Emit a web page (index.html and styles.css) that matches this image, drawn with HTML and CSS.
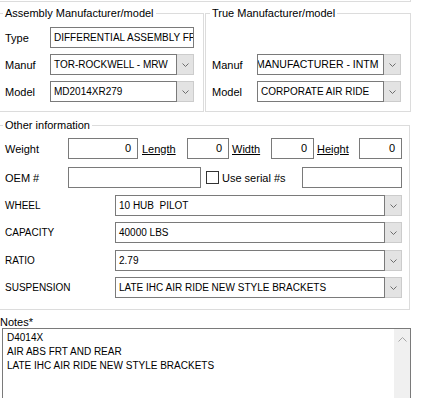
FILE: index.html
```html
<!DOCTYPE html>
<html lang="en">
<head>
    <meta charset="UTF-8">
    <meta name="viewport" content="width=device-width, initial-scale=1.0">
    <title>Assembly Details</title>
    <link rel="stylesheet" href="styles.css">
</head>
<body>

<div class="prev-box"></div>

<div class="top-groups">
    <fieldset class="group group-half">
        <legend>Assembly Manufacturer/model</legend>
        <div class="pair-row">
            <span class="caption">Type</span>
            <div class="textbox">DIFFERENTIAL ASSEMBLY FF</div>
        </div>
        <div class="pair-row">
            <span class="caption">Manuf</span>
            <div class="combo">
                <div class="combo-text">TOR-ROCKWELL - MRW</div>
                <div class="combo-btn"><svg width="7" height="4" viewBox="0 0 7 4"><polyline points="0.5,0.5 3.5,3.5 6.5,0.5" fill="none" stroke="#6d6d6d" stroke-width="1"/></svg></div>
            </div>
        </div>
        <div class="pair-row">
            <span class="caption">Model</span>
            <div class="combo">
                <div class="combo-text">MD2014XR279</div>
                <div class="combo-btn"><svg width="7" height="4" viewBox="0 0 7 4"><polyline points="0.5,0.5 3.5,3.5 6.5,0.5" fill="none" stroke="#6d6d6d" stroke-width="1"/></svg></div>
            </div>
        </div>
    </fieldset>

    <fieldset class="group group-half">
        <legend>True Manufacturer/model</legend>
        <div class="pair-row"></div>
        <div class="pair-row">
            <span class="caption">Manuf</span>
            <div class="combo">
                <div class="combo-text"><span class="scrolled">MANUFACTURER - INTM</span></div>
                <div class="combo-btn"><svg width="7" height="4" viewBox="0 0 7 4"><polyline points="0.5,0.5 3.5,3.5 6.5,0.5" fill="none" stroke="#6d6d6d" stroke-width="1"/></svg></div>
            </div>
        </div>
        <div class="pair-row">
            <span class="caption">Model</span>
            <div class="combo">
                <div class="combo-text">CORPORATE AIR RIDE</div>
                <div class="combo-btn"><svg width="7" height="4" viewBox="0 0 7 4"><polyline points="0.5,0.5 3.5,3.5 6.5,0.5" fill="none" stroke="#6d6d6d" stroke-width="1"/></svg></div>
            </div>
        </div>
    </fieldset>
</div>

<fieldset class="group group-other">
    <legend>Other information</legend>

    <div class="dim-row">
        <span class="caption caption-wide">Weight</span>
        <div class="textbox num w-weight">0</div>
        <a class="dim-link link-length">Length</a>
        <div class="textbox num w-length">0</div>
        <a class="dim-link link-width">Width</a>
        <div class="textbox num w-dim">0</div>
        <a class="dim-link link-height">Height</a>
        <div class="textbox num w-dim">0</div>
    </div>

    <div class="oem-row">
        <span class="caption caption-wide">OEM #</span>
        <div class="textbox w-oem"></div>
        <span class="checkbox"></span>
        <span class="check-label">Use serial #s</span>
        <div class="textbox w-serial"></div>
    </div>

    <div class="attr-row first-attr">
        <span class="attr-name">WHEEL</span>
        <div class="combo combo-wide">
            <div class="combo-text">10 HUB&nbsp; PILOT</div>
            <div class="combo-btn"><svg width="7" height="4" viewBox="0 0 7 4"><polyline points="0.5,0.5 3.5,3.5 6.5,0.5" fill="none" stroke="#6d6d6d" stroke-width="1"/></svg></div>
        </div>
    </div>
    <div class="attr-row">
        <span class="attr-name">CAPACITY</span>
        <div class="combo combo-wide">
            <div class="combo-text">40000 LBS</div>
            <div class="combo-btn"><svg width="7" height="4" viewBox="0 0 7 4"><polyline points="0.5,0.5 3.5,3.5 6.5,0.5" fill="none" stroke="#6d6d6d" stroke-width="1"/></svg></div>
        </div>
    </div>
    <div class="attr-row wide-gap">
        <span class="attr-name">RATIO</span>
        <div class="combo combo-wide">
            <div class="combo-text">2.79</div>
            <div class="combo-btn"><svg width="7" height="4" viewBox="0 0 7 4"><polyline points="0.5,0.5 3.5,3.5 6.5,0.5" fill="none" stroke="#6d6d6d" stroke-width="1"/></svg></div>
        </div>
    </div>
    <div class="attr-row">
        <span class="attr-name">SUSPENSION</span>
        <div class="combo combo-wide">
            <div class="combo-text">LATE IHC AIR RIDE NEW STYLE BRACKETS</div>
            <div class="combo-btn"><svg width="7" height="4" viewBox="0 0 7 4"><polyline points="0.5,0.5 3.5,3.5 6.5,0.5" fill="none" stroke="#6d6d6d" stroke-width="1"/></svg></div>
        </div>
    </div>
</fieldset>

<div class="notes-label">Notes*</div>
<div class="notes">
    <div class="notes-text">D4014X<br>AIR ABS FRT AND REAR<br>LATE IHC AIR RIDE NEW STYLE BRACKETS</div>
    <div class="scrollbar">
        <svg width="9" height="5" viewBox="0 0 9 5"><polyline points="0.5,4.5 4.5,0.5 8.5,4.5" fill="none" stroke="#a6a6a6" stroke-width="1"/></svg>
    </div>
</div>

</body>
</html>
```

FILE: styles.css
```css
body {
    margin: 0;
    width: 428px;
    height: 398px;
    overflow: hidden;
    background: #fff;
    color: #000;
    font-family: "Liberation Sans", Arial, sans-serif;
    font-size: 11px;
}
.prev-box {
    width: 410px;
    height: 1px;
    border-bottom: 1px solid #dcdcdc;
    border-right: 1px solid #dcdcdc;
}
.top-groups {
    display: flex;
    gap: 1px;
    margin-top: 4px;
    margin-left: -2px;
}
.group {
    box-sizing: border-box;
    margin: 0;
    border: 1px solid #dcdcdc;
    min-width: 0;
}
.group legend {
    padding: 0 2px;
    margin-left: -2px;
    line-height: 14px;
    font-size: 11px;
}
.group-half {
    width: 206px;
    padding: 7px 0 9px 6px;
}
.pair-row {
    display: flex;
    align-items: center;
    height: 21px;
    margin-bottom: 6px;
}
.pair-row:last-child {
    margin-bottom: 0;
}
.caption {
    width: 45px;
    flex: none;
}
.caption-wide {
    width: 63px;
}
.textbox {
    box-sizing: border-box;
    height: 21px;
    border: 1px solid #7a7a7a;
    background: #fff;
    padding: 0 3px;
    line-height: 19px;
    font-size: 10px;
    white-space: nowrap;
    overflow: hidden;
    flex: none;
}
.pair-row .textbox {
    width: 144px;
}
.combo {
    box-sizing: border-box;
    display: flex;
    width: 144px;
    height: 21px;
    flex: none;
}
.combo-text {
    flex: 1;
    min-width: 0;
    border: 1px solid #7a7a7a;
    padding: 0 3px;
    line-height: 19px;
    font-size: 10px;
    white-space: nowrap;
    overflow: hidden;
}
.combo-btn {
    width: 16px;
    flex: none;
    background: #e3e3e3;
    border: 1px solid #cccccc;
    border-left: none;
    display: flex;
    align-items: center;
    justify-content: center;
}
.scrolled {
    display: inline-block;
    margin-left: -5px;
    font-size: 10.5px;
}
.group-other {
    width: 412px;
    margin: 6px 0 0 -2px;
    padding: 6px 0 11px 6px;
}
.dim-row,
.oem-row {
    display: flex;
    align-items: center;
    height: 21px;
}
.oem-row {
    margin-top: 8px;
}
.num {
    text-align: right;
    padding-right: 6px;
    font-size: 11px;
}
.w-weight {
    width: 70px;
}
.w-length {
    width: 42px;
}
.w-dim {
    width: 43px;
}
.dim-link {
    color: #000;
    text-decoration: underline;
    flex: none;
}
.link-length {
    margin-left: 4px;
    width: 45px;
}
.link-width {
    margin-left: 3px;
    width: 39px;
}
.link-height {
    margin-left: 3px;
    width: 42px;
}
.w-oem {
    width: 133px;
}
.checkbox {
    box-sizing: border-box;
    width: 13px;
    height: 13px;
    margin-left: 5px;
    border: 1px solid #333;
    background: #fff;
    flex: none;
}
.check-label {
    margin-left: 3px;
    width: 80px;
    flex: none;
}
.w-serial {
    width: 100px;
}
.attr-row {
    display: flex;
    align-items: center;
    height: 21px;
    margin-top: 6px;
}
.first-attr {
    margin-top: 7px;
}
.wide-gap {
    margin-top: 7px;
}
.attr-name {
    width: 110px;
    flex: none;
    font-size: 10px;
}
.combo-wide {
    width: 287px;
}
.notes-label {
    margin-top: 5px;
    height: 13px;
    line-height: 14px;
}
.notes {
    display: flex;
    box-sizing: border-box;
    width: 409px;
    height: 80px;
    margin-left: 2px;
    border: 1px solid #7a7a7a;
}
.notes-text {
    flex: 1;
    padding: 2px 4px 0;
    font-size: 10px;
    line-height: 14px;
}
.scrollbar {
    width: 16px;
    background: #f0f0f0;
    display: flex;
    justify-content: center;
    padding-top: 8px;
    box-sizing: border-box;
}
```
